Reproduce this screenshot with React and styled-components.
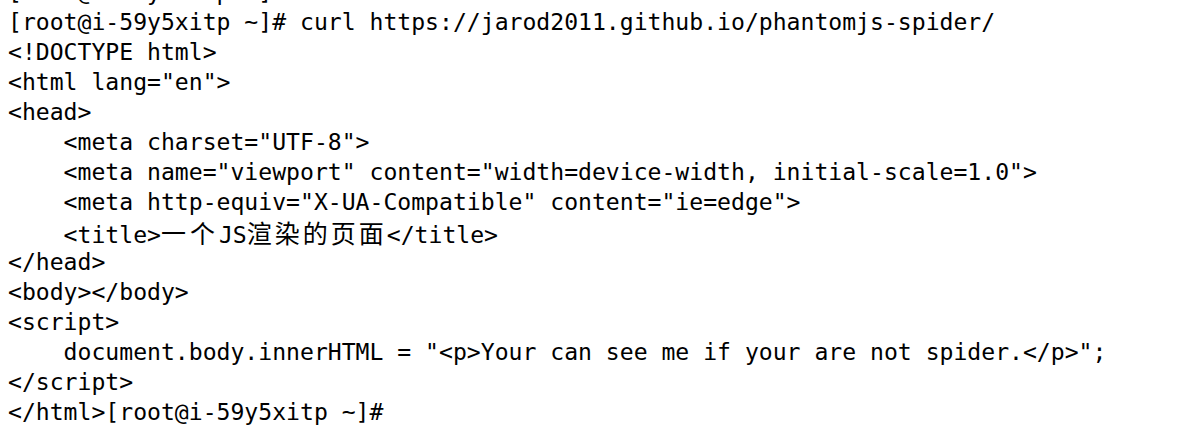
import React from "react";
import styled, { createGlobalStyle } from "styled-components";

const GlobalStyle = createGlobalStyle`
  html, body {
    margin: 0;
    padding: 0;
    background: #ffffff;
    overflow: hidden;
  }
`;

const Terminal = styled.div`
  width: 1200px;
  height: 432px;
  overflow: hidden;
  background: #ffffff;
  color: #000000;
  font-family: "DejaVu Sans Mono", "Liberation Mono", monospace;
  font-size: 23.1px;
  padding-left: 8px;
  box-sizing: border-box;
`;

const Lines = styled.div`
  margin-top: -23px;
`;

const Line = styled.div`
  height: 30px;
  line-height: 30px;
  white-space: pre;
`;

const Cjk = styled.span`
  font-family: "Noto Sans CJK SC", sans-serif;
  font-size: 25px;
  letter-spacing: ${(p) => p.$gap}px;
`;

const lines = [
  "[root@i-59y5xitp ~]# clear",
  "[root@i-59y5xitp ~]# curl https://jarod2011.github.io/phantomjs-spider/",
  "<!DOCTYPE html>",
  '<html lang="en">',
  "<head>",
  '    <meta charset="UTF-8">',
  '    <meta name="viewport" content="width=device-width, initial-scale=1.0">',
  '    <meta http-equiv="X-UA-Compatible" content="ie=edge">',
  "TITLE",
  "</head>",
  "<body></body>",
  "<script>",
  '    document.body.innerHTML = "<p>Your can see me if your are not spider.</p>";',
  "</script>",
  "</html>[root@i-59y5xitp ~]#",
  "[root@i-59y5xitp ~]# ",
];

export default function App() {
  return (
    <Terminal>
      <GlobalStyle />
      <Lines>
        {lines.map((text, i) =>
          text === "TITLE" ? (
            <Line key={i}>
              {"    <title>"}
              <Cjk $gap={4}>一个</Cjk>
              JS
              <Cjk $gap={3}>渲染的页面</Cjk>
              {"</title>"}
            </Line>
          ) : (
            <Line key={i}>{text}</Line>
          )
        )}
      </Lines>
    </Terminal>
  );
}
